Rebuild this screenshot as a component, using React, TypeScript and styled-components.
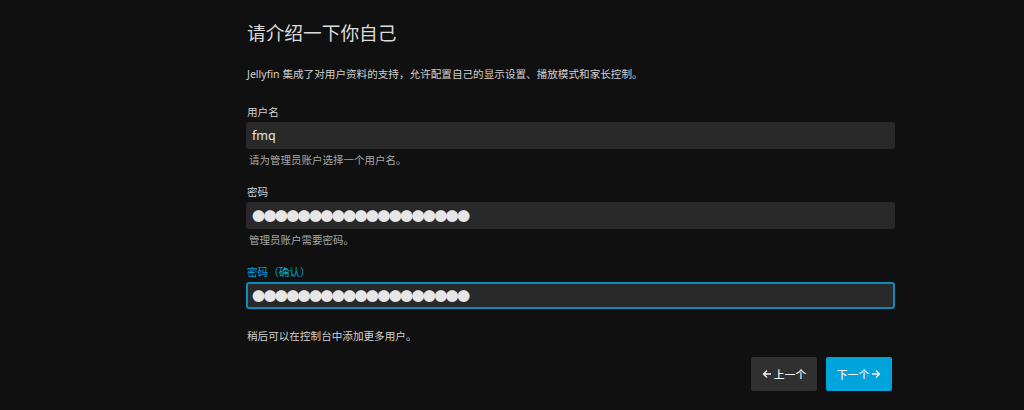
import React from "react";
import styled, { createGlobalStyle } from "styled-components";

const Global = createGlobalStyle`
  html, body { margin: 0; padding: 0; background: #101010; }
  body { font-family: "Noto Sans", "Noto Sans CJK SC", sans-serif; color: #e0e0e0; }
`;

const Page = styled.div`
  width: 1024px;
  height: 410px;
  background: #101010;
  overflow: hidden;
`;

const Form = styled.form`
  width: 649px;
  margin-left: 246px;
  padding-top: 21px;
  display: flex;
  flex-direction: column;
`;

const Title = styled.h1`
  margin: 0 0 0 1px;
  font-size: 18.7px;
  line-height: 24px;
  font-weight: 400;
  color: #dcdcdc;
`;

const Intro = styled.p`
  margin: 22px 0 0 1px;
  font-size: 10.6px;
  line-height: 14px;
  color: #d0d0d0;
`;

const Field = styled.div<{ $top: number }>`
  margin-top: ${(p) => p.$top}px;
  display: flex;
  flex-direction: column;
`;

const Label = styled.label<{ $active?: boolean }>`
  font-size: 10.6px;
  line-height: 14px;
  margin-left: 1px;
  margin-bottom: 3px;
  color: ${(p) => (p.$active ? "#00a4dc" : "#d0d0d0")};
`;

const Input = styled.input<{ $active?: boolean; $dots?: boolean }>`
  box-sizing: border-box;
  width: 100%;
  height: 27px;
  margin: 0;
  padding: 0 0 0 ${(p) => (p.$active ? 4 : 6)}px;
  background: #292929;
  border: ${(p) => (p.$active ? "2px solid #0b8cbd" : "none")};
  border-radius: 3px;
  outline: none;
  color: #e6e6e6;
  font-family: "Noto Sans", "Noto Sans CJK SC", sans-serif;
  font-size: ${(p) => (p.$dots ? "13.2px" : "12.5px")};
  letter-spacing: ${(p) => (p.$dots ? "-1.8px" : "0")};
`;

const Help = styled.div`
  margin-top: 4px;
  margin-left: 3px;
  font-size: 10.5px;
  line-height: 14px;
  color: #a8a8a8;
`;

const Note = styled.p`
  margin: 20px 0 0 1px;
  font-size: 10.6px;
  line-height: 14px;
  color: #d0d0d0;
`;

const Buttons = styled.div`
  display: flex;
  justify-content: flex-end;
  gap: 9px;
  margin-top: 14px;
  margin-right: 3px;
`;

const Button = styled.button<{ $primary?: boolean }>`
  box-sizing: border-box;
  width: 66px;
  height: 34px;
  border: none;
  border-radius: 2px;
  background: ${(p) => (p.$primary ? "#00a4dc" : "#303030")};
  color: #f2f2f2;
  font-family: "Noto Sans", "Noto Sans CJK SC", sans-serif;
  font-size: 10.8px;
  font-weight: 500;
  display: flex;
  align-items: center;
  justify-content: center;
  gap: 2px;
  padding: 0;
`;

const Arrow = styled.svg`
  width: 10px;
  height: 10px;
  flex: none;
`;

const LeftArrow = () => (
  <Arrow viewBox="0 0 10 10" fill="none" stroke="#f2f2f2" strokeWidth="1.3">
    <path d="M9 5H1.5M5 1.5L1.5 5L5 8.5" />
  </Arrow>
);
const RightArrow = () => (
  <Arrow viewBox="0 0 10 10" fill="none" stroke="#f2f2f2" strokeWidth="1.3">
    <path d="M1 5H8.5M5 1.5L8.5 5L5 8.5" />
  </Arrow>
);

const dots = "●".repeat(19);

export default function App() {
  return (
    <Page>
      <Global />
      <Form onSubmit={(e) => e.preventDefault()}>
        <Title>请介绍一下你自己</Title>
        <Intro>Jellyfin 集成了对用户资料的支持，允许配置自己的显示设置、播放模式和家长控制。</Intro>
        <Field $top={24}>
          <Label>用户名</Label>
          <Input readOnly value="fmq" />
          <Help>请为管理员账户选择一个用户名。</Help>
        </Field>
        <Field $top={18}>
          <Label>密码</Label>
          <Input readOnly $dots value={dots} />
          <Help>管理员账户需要密码。</Help>
        </Field>
        <Field $top={18}>
          <Label $active>密码（确认）</Label>
          <Input readOnly $dots $active value={dots} />
        </Field>
        <Note>稍后可以在控制台中添加更多用户。</Note>
        <Buttons>
          <Button type="button">
            <LeftArrow />
            上一个
          </Button>
          <Button type="button" $primary>
            下一个
            <RightArrow />
          </Button>
        </Buttons>
      </Form>
    </Page>
  );
}
